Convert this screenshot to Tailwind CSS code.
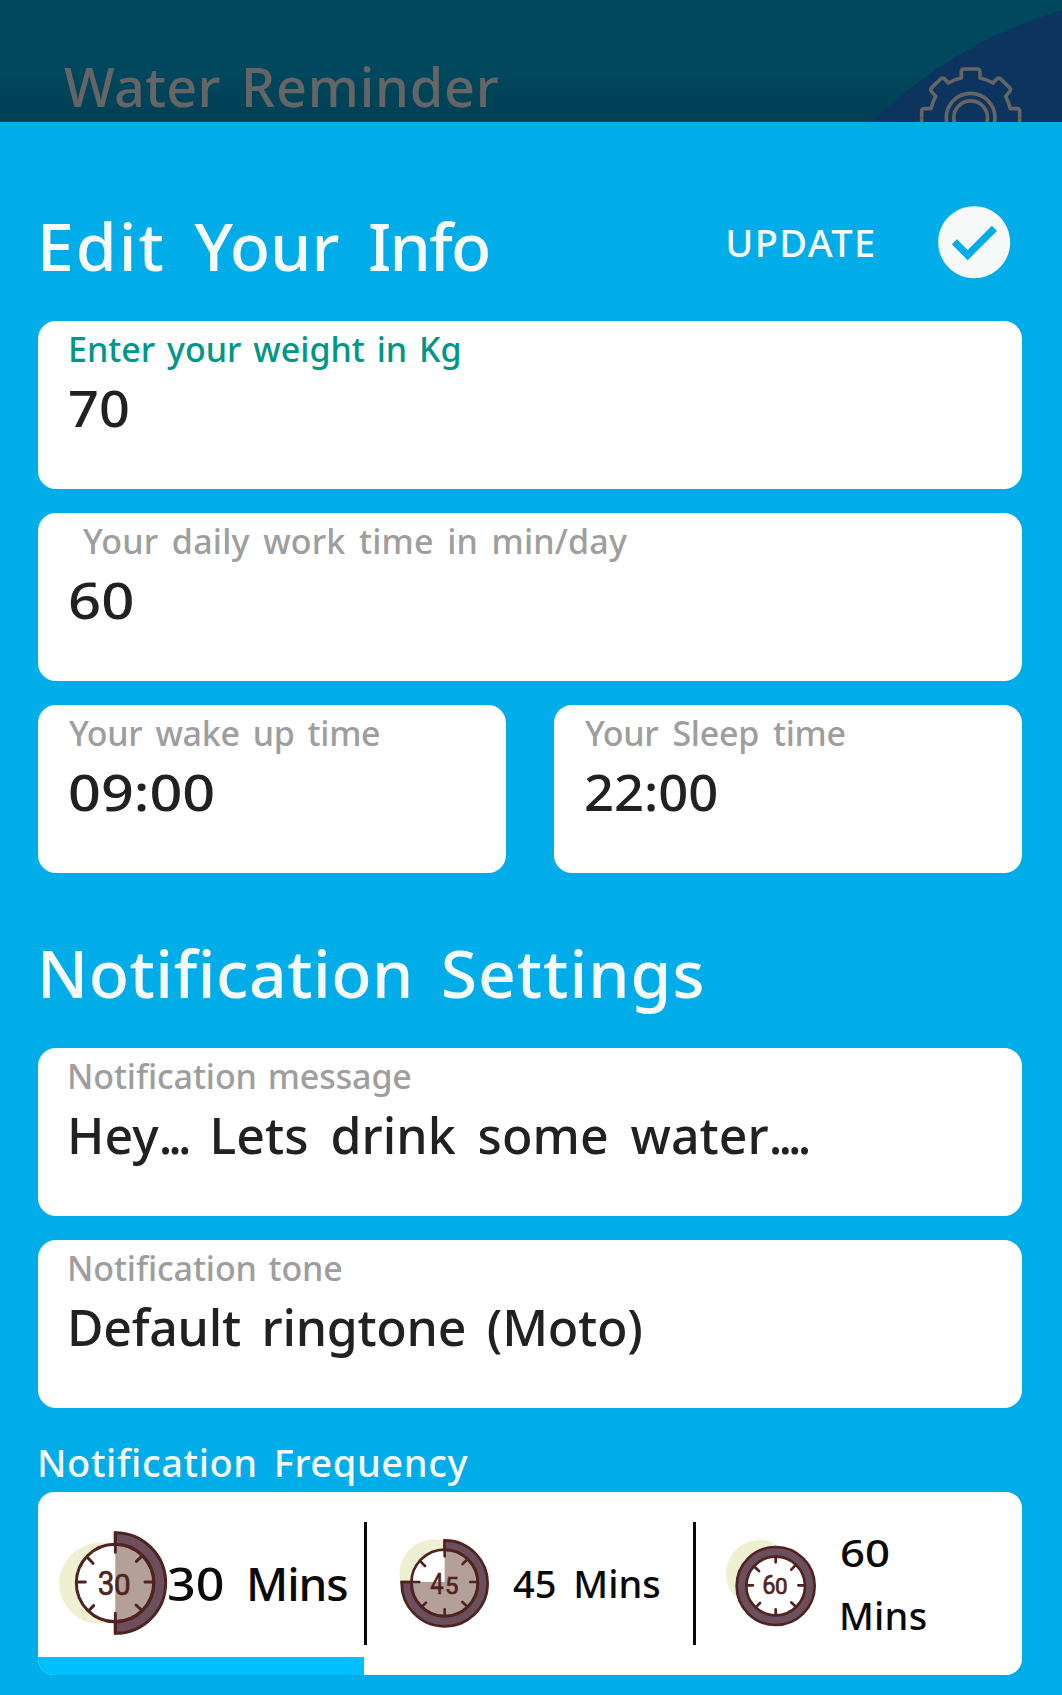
<!DOCTYPE html>
<html lang="en">
<head>
  <meta charset="UTF-8">
  <meta name="viewport" content="width=device-width, initial-scale=1">
  <title>Water Reminder</title>
  <script src="https://cdn.jsdelivr.net/npm/@tailwindcss/browser@4"></script>
</head>

<body class="h-[1695px] overflow-hidden bg-[#00ade9] font-['Noto_Sans',sans-serif] font-medium">
  <!-- Dimmed app bar behind the sheet -->
  <header class="relative h-[122px] overflow-hidden bg-linear-to-b from-[#01475d] from-60% to-[#003f54] flex items-start justify-between pl-[64px] pr-[40px]">
    <svg class="absolute inset-0" width="1062" height="122" viewBox="0 0 1062 122">
      <circle cx="1182" cy="429" r="435.500" fill="#0d335f"/>
    </svg>
    <h1 class="relative mt-[50px] text-[54px] leading-[72px] tracking-[0.3px] [word-spacing:6px] text-[#656565]">Water <span class="tracking-[0.8px]">Reminder</span></h1>
    <svg class="relative mt-[66px] shrink-0" width="103.3" height="103.3" viewBox="178 198 310 310" fill="none" stroke="#656565" stroke-width="11" stroke-linejoin="round">
      <path d="M186 353V334Q186 326 194 326H214Q218 308 228 289L216 275Q211 269 216 263L243 237Q249 232 254 236L266 249Q284 238 305 234V215Q305 207 313 207H353Q361 207 361 215V234Q382 238 400 249L412 236Q417 232 423 237L450 263Q455 269 450 275L438 289Q448 308 452 326H472Q480 326 480 334V353"/>
      <path transform="matrix(1 0 0 -1 0 706)" d="M186 353V334Q186 326 194 326H214Q218 308 228 289L216 275Q211 269 216 263L243 237Q249 232 254 236L266 249Q284 238 305 234V215Q305 207 313 207H353Q361 207 361 215V234Q382 238 400 249L412 236Q417 232 423 237L450 263Q455 269 450 275L438 289Q448 308 452 326H472Q480 326 480 334V353"/>
      <circle cx="333" cy="353" r="73"/>
      <circle cx="333" cy="353" r="50.5"/>
    </svg>
  </header>

  <main class="pl-[38px] pt-[72px] pr-[40px]">
    <div class="flex items-center justify-between h-24 pr-[5px] text-[#f7f9f9]">
      <h2 class="-ml-px pt-[7px] text-[66px] leading-[89px] [word-spacing:11.5px]"><span class="tracking-[2px]">Edit</span> Your <span class="tracking-[-1.8px]">Info</span></h2>
      <button class="flex items-center gap-[54px]">
        <span class="text-[38px] leading-[52px] tracking-[1.4px]">UPDATE</span>
        <svg width="86.4" height="86.4" viewBox="0 0 24 24" fill="currentColor">
          <path d="M12 2C6.48 2 2 6.48 2 12s4.48 10 10 10 10-4.48 10-10S17.52 2 12 2zm-1.8 15l-4.4-4.4 1.41-1.41 2.99 2.99 6.72-6.72 1.41 1.41L10.200 17z"/>
        </svg>
      </button>
    </div>

    <div class="mt-[31px] flex flex-col gap-6 text-[#212121]">
      <div class="h-[168px] rounded-[18px] bg-white pt-[8px] pl-[30px]">
        <p class="text-[34px] leading-[40px] [word-spacing:3px] text-[#009688]">Enter your weight in Kg</p>
        <p class="w-fit origin-left scale-x-108 text-[50px] leading-[79px]">70</p>
      </div>

      <div class="h-[168px] rounded-[18px] bg-white pt-[8px] pl-[29px]">
        <p class="ml-[16px] text-[34px] leading-[40px] tracking-[0.2px] [word-spacing:4.4px] text-[#9e9e9e]">Your daily work time in min/day</p>
        <p class="ml-px w-fit origin-left scale-x-116 text-[50px] leading-[79px]">60</p>
      </div>

      <div class="grid grid-cols-2 gap-12">
        <div class="h-[168px] rounded-[18px] bg-white pt-[8px] pl-[29px]">
          <p class="ml-[2px] text-[34px] leading-[40px] tracking-[-0.3px] [word-spacing:4.5px] text-[#9e9e9e]">Your wake up time</p>
          <p class="ml-px w-fit origin-left scale-x-115 text-[50px] leading-[79px]">09:00</p>
        </div>
        <div class="h-[168px] rounded-[18px] bg-white pt-[8px] pl-[29px]">
          <p class="ml-[2px] text-[34px] leading-[40px] tracking-[-0.3px] [word-spacing:5.5px] text-[#9e9e9e]">Your Sleep time</p>
          <p class="ml-px w-fit origin-left scale-x-105 text-[50px] leading-[79px]">22:00</p>
        </div>
      </div>

      <h2 class="mt-[30px] mb-[7px] -ml-px text-[66px] leading-[90px] tracking-[0.5px] [word-spacing:9px] text-[#f7f9f9]">Notification <span class="tracking-[1px]">Settings</span></h2>

      <div class="h-[168px] rounded-[18px] bg-white pt-[8px] pl-[29px]">
        <p class="text-[34px] leading-[40px] tracking-[-0.11px] [word-spacing:2.2px] text-[#9e9e9e]">Notification message</p>
        <p class="text-[50px] leading-[79px] tracking-[0.05px] [word-spacing:8.8px]">Hey<span class="tracking-[-3.9px]">...</span> Lets drink some water<span class="tracking-[-3.9px]">....</span></p>
      </div>

      <div class="h-[168px] rounded-[18px] bg-white pt-[8px] pl-[29px]">
        <p class="text-[34px] leading-[40px] tracking-[-0.11px] [word-spacing:3px] text-[#9e9e9e]">Notification tone</p>
        <p class="text-[50px] leading-[79px] tracking-[-0.27px] [word-spacing:8px]">Default ringtone (Moto)</p>
      </div>
    </div>

    <h3 class="mt-6 -ml-px text-[38px] leading-[60px] tracking-[0.6px] [word-spacing:5.5px] text-[#f7f9f9]">Notification Frequency</h3>

    <div class="flex h-[183px] overflow-hidden rounded-2xl bg-white text-[#0a0a0a] text-[38px] leading-[63px]">
      <!-- 30 min, selected -->
      <div class="relative flex items-center w-[326px] pl-[20px] text-[46px]">
        <svg class="-mt-[2px] shrink-0" width="110" height="106" viewBox="84 120 330 318" fill="none" stroke="#4f2420" stroke-width="9" stroke-linecap="round">
          <circle cx="209" cy="280" r="121.500" fill="#efefd2" stroke="none"/>
          <circle cx="255" cy="279" r="116" fill="#fff" stroke="none"/>
          <path d="M256 163A116 116 0 0 1 256 395Z" fill="#b3a098" stroke="none"/>
          <path d="M256 128A151 151 0 0 1 256 430V395A116 116 0 0 0 256 163Z" fill="#6b4f5c"/>
          <circle cx="255" cy="279" r="116"/>
          <path d="M256 128V187M256 370V430M144 276H166M345 276H368M174 204L189 220M335 199L319 214M191 347L177 361M318 345L334 360"/>
          <g fill="#4f2420" stroke-width="2" font-family="Roboto, sans-serif" font-weight="400">
            <text x="203" y="316" font-size="98" textLength="50" lengthAdjust="spacingAndGlyphs">3</text>
            <text x="252" y="316" font-size="87" textLength="50" lengthAdjust="spacingAndGlyphs">0</text>
          </g>
        </svg>
        <span class="-ml-px w-[58px] origin-left scale-x-109">30</span>
        <span class="ml-[21px] tracking-[-1.1px]">Mins</span>
        <div class="absolute bottom-0 left-0 h-[18px] w-full bg-[#00bfff]"></div>
      </div>
      <div class="mt-[30px] h-[123px] w-[3px] bg-[#0a0a0a]"></div>

      <!-- 45 min -->
      <div class="flex items-center gap-[23px] w-[326px] pl-[31px]">
        <svg class="-mt-[2px] shrink-0" width="92" height="90" viewBox="84 144 276 270" fill="none" stroke="#4f2420" stroke-width="8" stroke-linecap="round">
          <circle cx="192" cy="252" r="104" fill="#efefd2" stroke="none"/>
          <circle cx="224" cy="279" r="99" fill="#fff" stroke="none"/>
          <path d="M224 276V180A99 99 0 1 1 125 276Z" fill="#b3a098" stroke="none"/>
          <path d="M224 151A129 129 0 1 1 95 276H125A99 99 0 1 0 224 180Z" fill="#6b4f5c"/>
          <circle cx="224" cy="279" r="100"/>
          <path d="M224 151V199M95 276H148M301 276H322M224 358V378M150 213L165 228M291 209L278 222M168 338L156 350M277 336L291 349"/>
          <g fill="#4f2420" stroke-width="2" font-family="Roboto, sans-serif" font-weight="400">
            <text x="181" y="311" font-size="88" textLength="40" lengthAdjust="spacingAndGlyphs">4</text>
            <text x="225" y="311" font-size="72">5</text>
          </g>
        </svg>
        <span class="[word-spacing:7px]">45 Mins</span>
      </div>
      <div class="mt-[30px] h-[123px] w-[3px] bg-[#0a0a0a]"></div>

      <!-- 60 min -->
      <div class="flex flex-1 items-center gap-[22px] pl-[29px]">
        <svg class="-mt-[2px] shrink-0" width="92" height="88" viewBox="105 147 276 264" fill="none" stroke="#4f2420" stroke-width="8" stroke-linecap="round">
          <circle cx="209" cy="251" r="101" fill="#efefd2" stroke="none"/>
          <circle cx="257" cy="288" r="117" fill="#6b4f5c"/>
          <circle cx="257" cy="288" r="88" fill="#fff"/>
          <path d="M257 204V217M257 358V374M174 286H189M325 286H342M195 232L207 243M315 227L304 239M210 339L200 349M304 337L315 348"/>
          <g fill="#4f2420" stroke-width="2" font-family="Roboto, sans-serif" font-weight="400">
            <text x="217" y="313" font-size="80" textLength="40" lengthAdjust="spacingAndGlyphs">6</text>
            <text x="255" y="313" font-size="67">0</text>
          </g>
        </svg>
        <div>
          <p class="ml-px w-fit origin-left scale-x-115">60</p>
          <p class="tracking-[0.24px]">Mins</p>
        </div>
      </div>
    </div>
  </main>
</body>
</html>
